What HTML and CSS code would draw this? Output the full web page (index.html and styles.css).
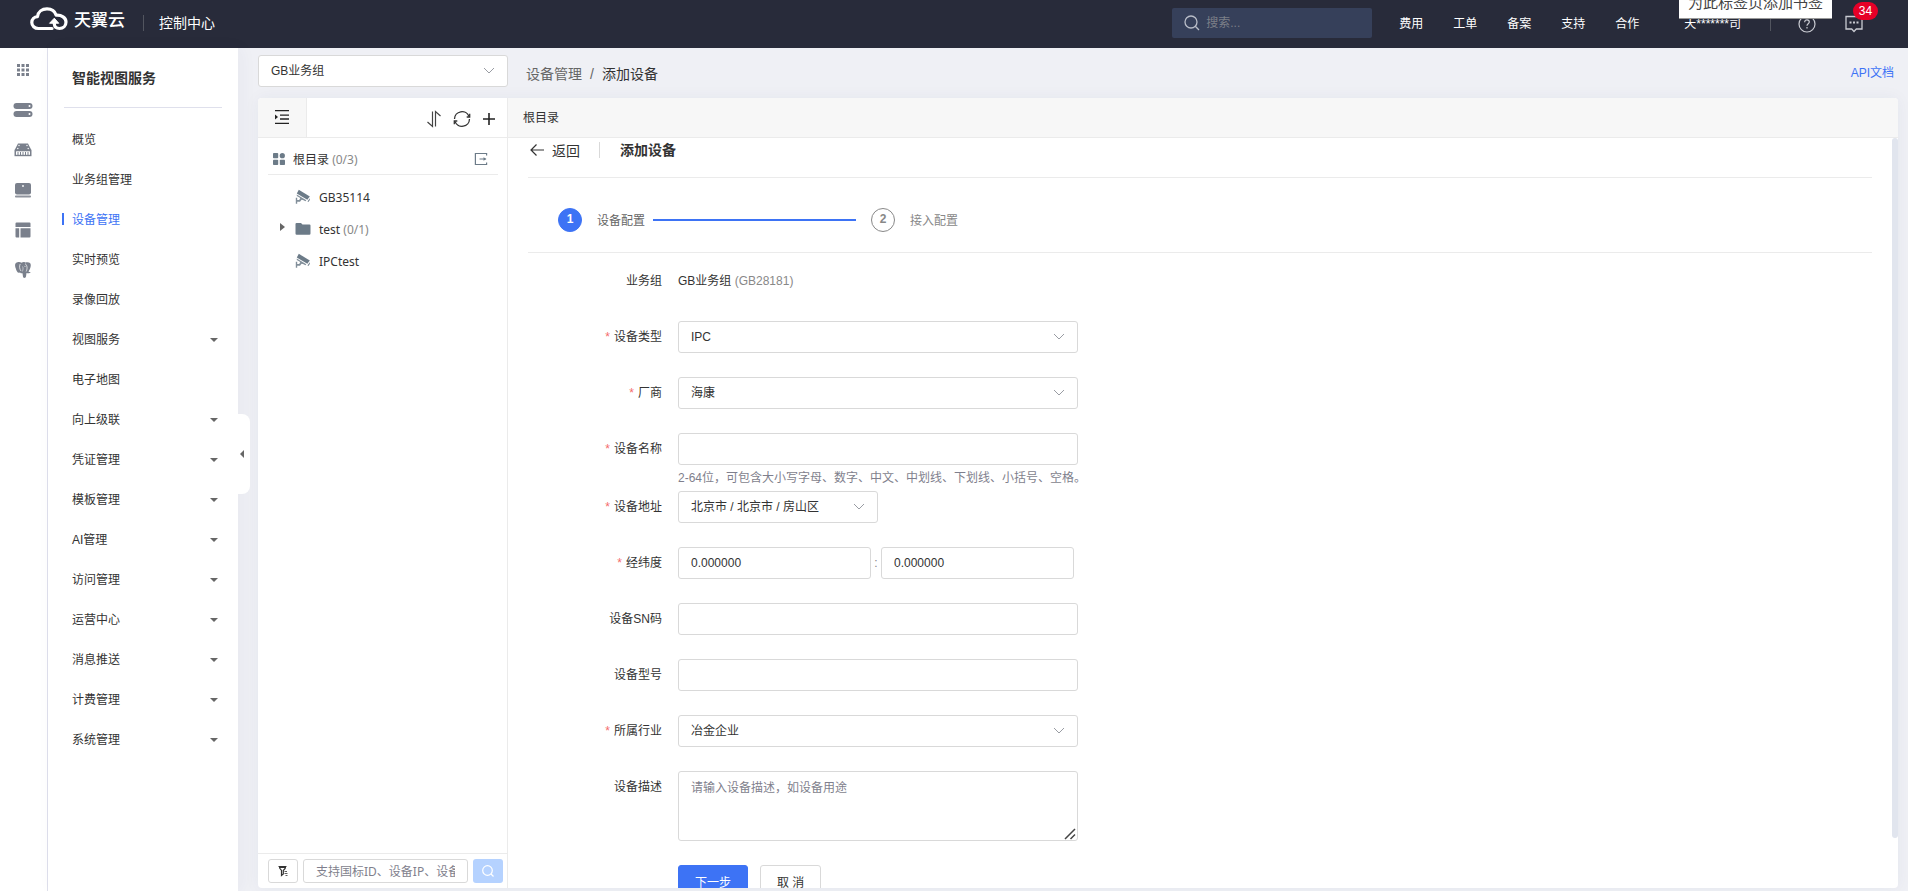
FILE: index.html
```html
<!DOCTYPE html>
<html lang="zh-CN">
  <head>
    <meta charset="utf-8">
    <title>智能视图服务 - 添加设备</title>
    <link rel="stylesheet" href="styles.css">
  </head>
  <body>
    <header class="header">
      <svg class="logo" width="38" height="24" viewBox="0 0 38 24" fill="none" stroke="#fff" stroke-width="3.2" stroke-linecap="round" stroke-linejoin="round">
        <path d="M22 21.5H8.500C4.500 21.500 1.800 18.800 1.800 15.500C1.800 12.300 4.300 9.800 7.500 9.600C8 4.800 12 1.800 17 1.800C21.500 1.800 25 4.300 26.200 8.200C31.500 7.800 36 10.800 36 15C36 18.800 33.300 21.500 29.500 21.500C26.500 21.500 24.500 19.600 24.300 17V15.500"/>
        <path d="M19.800 16L24.300 11.200L28.500 16Z" fill="#fff" stroke-width="1"/>
      </svg>
      <span class="brand">天翼云</span>
      <span class="header-line"></span>
      <a class="console" href="#">控制中心</a>
      <label class="search">
        <svg width="16" height="16" viewBox="0 0 16 16" fill="none" stroke="#b9bdc8" stroke-width="1.300"><circle cx="7" cy="7" r="6"/><path d="M11.300 11.300L15 15"/></svg>
        <input type="text" placeholder="搜索..." aria-label="搜索">
      </label>
      <nav class="top-nav">
        <a href="#">费用</a>
        <a href="#">工单</a>
        <a href="#">备案</a>
        <a href="#">支持</a>
        <a href="#">合作</a>
      </nav>
      <a class="user" href="#">天*******司</a>
      <span class="header-line user-line"></span>
      <button class="header-btn help-btn" aria-label="帮助">
        <svg width="18" height="18" viewBox="0 0 18 18" fill="none" stroke="#c9cbd2" stroke-width="1.200"><circle cx="9" cy="9" r="8"/><path d="M6.700 7.200C6.700 5.700 7.700 4.800 9 4.800S11.300 5.700 11.300 7C11.300 8.700 9 8.800 9 10.700"/><path d="M9 12v1.400"/></svg>
      </button>
      <button class="header-btn" aria-label="消息">
        <svg width="18" height="18" viewBox="0 0 18 18" fill="none" stroke="#c9cbd2" stroke-width="1.300"><path d="M1 1.500H17V14H11.300L9 16.500L6.700 14H1Z"/><path d="M4.500 7.500h2M8 7.500h2M11.500 7.500h2" stroke-width="1.800"/></svg>
        <span class="badge">34</span>
      </button>
      <div class="tooltip">为此标签页添加书签</div>
    </header>

    <div class="page">
      <nav class="rail">
        <a href="#" aria-label="全部产品"><svg width="20" height="20" viewBox="0 0 20 20"><path d="M4 4h3v3H4zM8.500 4h3v3h-3zM13 4h3v3h-3zM4 8.500h3v3H4zM8.500 8.500h3v3h-3zM13 8.500h3v3h-3zM4 13h3v3H4zM8.500 13h3v3h-3zM13 13h3v3h-3z"/></svg></a>
        <a href="#" aria-label="云主机"><svg width="20" height="20" viewBox="0 0 20 20"><rect x="0.500" y="3" width="19" height="6" rx="3"/><rect x="0.500" y="11" width="19" height="6" rx="3"/><circle cx="16.500" cy="6" r="1" fill="#fff"/><circle cx="16.500" cy="14" r="1" fill="#fff"/></svg></a>
        <a href="#" aria-label="物理机"><svg width="20" height="20" viewBox="0 0 20 20"><path d="M5 3.500h10l3.300 6.500H1.700z"/><path d="M1.500 9.800h17v6.400h-17z"/><path d="M3 11.300h14v3.500H3z" fill="#fff"/><path d="M4.500 12h1v3h-1zM7 12h1v3H7zM9.500 12h1v3h-1zM12 12h1v3h-1zM14.500 12h1v3h-1z"/><circle cx="6" cy="5.500" r="0.700" fill="#fff"/><circle cx="14" cy="5.500" r="0.700" fill="#fff"/><circle cx="4.800" cy="8.500" r="0.700" fill="#fff"/><circle cx="15.200" cy="8.500" r="0.700" fill="#fff"/></svg></a>
        <a href="#" aria-label="云桌面"><svg width="20" height="20" viewBox="0 0 20 20"><rect x="2" y="3" width="16" height="11.500" rx="2"/><rect x="2" y="15.500" width="16" height="2" rx="0.800" opacity="0.850"/><circle cx="10" cy="6" r="0.900" fill="#fff"/></svg></a>
        <a href="#" aria-label="控制面板"><svg width="20" height="20" viewBox="0 0 20 20"><path d="M4 2.500h12.500a1 1 0 0 1 1 1V7H2.500V3.500a1 1 0 0 1 1-1zM2.500 8.200h3.700v9.300H3.500a1 1 0 0 1-1-1zM7.500 8.200h10v8.300a1 1 0 0 1-1 1h-9z"/></svg></a>
        <a href="#" aria-label="PostgreSQL"><svg width="20" height="20" viewBox="0 0 20 20"><path d="M4.500 2.200C6 1.700 7.500 2 8.500 2.700C10 1.900 11 2 12.300 2.500C14 1.900 16 2 17 3C18.500 4.500 17.800 8 15.500 11.500C16 12.200 17.300 11.900 17.600 12.200C17 13.400 14.800 13.700 13.500 13L13 16.500C12.700 18.300 10.300 18.500 10 16.800L9.500 13.200C8.300 13.600 6.800 13.200 7.200 12.200C5 14 3.700 11.500 2.800 8.500C1.500 4.800 2 2.900 4.500 2.200Z"/><path d="M7.200 4C6 6.500 6.600 9 8 11M12 3.500C14.500 5.500 14.500 8.500 13.200 11.500" fill="none" stroke="#fff" stroke-width="0.700"/><path d="M9.500 6.500C10.500 8 10 10 9.300 11.500" fill="none" stroke="#fff" stroke-width="0.500"/><circle cx="12" cy="6.300" r="0.500" fill="#fff"/></svg></a>
      </nav>

      <aside class="sidebar">
        <h2 class="side-title">智能视图服务</h2>
        <ul class="menu">
          <li><a href="#">概览</a></li>
          <li><a href="#">业务组管理</a></li>
          <li><a href="#" class="active">设备管理</a></li>
          <li><a href="#">实时预览</a></li>
          <li><a href="#">录像回放</a></li>
          <li><a href="#" class="more">视图服务</a></li>
          <li><a href="#">电子地图</a></li>
          <li><a href="#" class="more">向上级联</a></li>
          <li><a href="#" class="more">凭证管理</a></li>
          <li><a href="#" class="more">模板管理</a></li>
          <li><a href="#" class="more">AI管理</a></li>
          <li><a href="#" class="more">访问管理</a></li>
          <li><a href="#" class="more">运营中心</a></li>
          <li><a href="#" class="more">消息推送</a></li>
          <li><a href="#" class="more">计费管理</a></li>
          <li><a href="#" class="more">系统管理</a></li>
        </ul>
        <button class="collapse" aria-label="收起菜单"></button>
      </aside>

      <main class="main">
        <div class="topbar">
          <div class="select group-select">
            <select aria-label="业务组"><option>GB业务组</option></select>
            <svg width="12" height="8" viewBox="0 0 12 8"><path d="M1 1l5 5 5-5"/></svg>
          </div>
          <div class="breadcrumb"><a href="#">设备管理</a><span class="slash">/</span><span class="current">添加设备</span></div>
          <a class="api-link" href="#">API文档</a>
        </div>

        <div class="panel">
          <section class="tree">
            <div class="tree-tools">
              <button class="fold" aria-label="折叠目录">
                <svg width="16" height="16" viewBox="0 0 16 16" stroke="#222" stroke-width="1.300" fill="none"><path d="M1 1.700h14M6 6.200h9M6 10h9M1 14.300h14"/><path d="M1 5.500L4 8L1 10.500Z" fill="#222" stroke="none"/></svg>
              </button>
              <div class="tree-actions">
                <button aria-label="排序"><svg width="16" height="18" viewBox="0 0 16 18" stroke="#444" stroke-width="1.200" fill="none"><path d="M1.500 12L6.500 16.500V1.500M9.500 16.500V1.500L14.500 6"/></svg></button>
                <button aria-label="刷新"><svg width="18" height="18" viewBox="0 0 18 18" stroke="#333" stroke-width="1.300" fill="none"><path d="M1.500 9A7.500 7.500 0 0 1 16 6.500M16.500 9A7.500 7.500 0 0 1 2 11.500"/><path d="M16.700 3.800V7H13.700M1.300 14.200V11H4.300"/></svg></button>
                <button aria-label="添加"><svg width="14" height="14" viewBox="0 0 14 14" stroke="#222" stroke-width="1.600" fill="none"><path d="M7 1v12M1 7h12"/></svg></button>
              </div>
            </div>
            <div class="tree-root">
              <svg width="12" height="12" viewBox="0 0 12 12" fill="#6c7b88"><rect width="5.200" height="5.200" rx="0.800"/><circle cx="9.300" cy="2.700" r="2.600"/><rect y="6.800" width="5.200" height="5.200" rx="0.800"/><rect x="6.800" y="6.800" width="5.200" height="5.200" rx="0.800"/></svg>
              <span>根目录 <em>(0/3)</em></span>
              <button class="export" aria-label="导出"><svg width="14" height="14" viewBox="0 0 14 14" stroke="#6c7b88" stroke-width="1.200" fill="none"><path d="M12.600 3.500V1.500H1.400v11h11.200V10.500"/><path d="M5.500 7h6"/><path d="M9.500 5.200L12.500 7L9.500 8.800Z" fill="#6c7b88" stroke="none"/></svg></button>
            </div>
            <ul class="tree-list">
              <li>
                <svg class="node-icon" width="16" height="16" viewBox="0 0 16 16" fill="#6c7b88"><path d="M3.800 0.800L14.800 7.500L12.300 10.800L1.800 4.500Z"/><path d="M1.800 5.500L11.300 11.200L10.500 12.300L8 11L6.500 10.800L5 12.800H2.200V14.800H0.800V8.800H2.200V11H4.200L5.300 9L1.800 7Z" opacity="0.850"/><path d="M12.500 12.500L14.800 9.300V11L13.300 13Z"/></svg>
                <span>GB35114</span>
              </li>
              <li class="has-children">
                <svg class="node-icon" width="16" height="16" viewBox="0 0 16 16" fill="#6c7b88"><path d="M1.500 2H6L7.500 3.500H14.500A1 1 0 0 1 15.500 4.500V12.500A1.200 1.200 0 0 1 14.300 13.700H1.700A1.200 1.200 0 0 1 0.500 12.500V3A1 1 0 0 1 1.500 2Z"/></svg>
                <span>test <em>(0/1)</em></span>
              </li>
              <li>
                <svg class="node-icon" width="16" height="16" viewBox="0 0 16 16" fill="#6c7b88"><path d="M3.800 0.800L14.800 7.500L12.300 10.800L1.800 4.500Z"/><path d="M1.800 5.500L11.300 11.200L10.500 12.300L8 11L6.500 10.800L5 12.800H2.200V14.800H0.800V8.800H2.200V11H4.200L5.300 9L1.800 7Z" opacity="0.850"/><path d="M12.500 12.500L14.800 9.300V11L13.300 13Z"/></svg>
                <span>IPCtest</span>
              </li>
            </ul>
            <div class="tree-search">
              <button class="filter" aria-label="筛选"><svg width="12" height="12" viewBox="0 0 12 12" stroke="#333" stroke-width="1.200" fill="none"><path d="M1.500 1.500H9.500M2 2.500H9M2.500 3L4.500 5.500V10.500L6.300 9V5.500L8.500 3"/><path d="M7.500 6.500h2.500M7.500 8.500h3M8.500 10.500h2" stroke-width="0.800"/></svg></button>
              <input type="text" placeholder="支持国标ID、设备IP、设备名" aria-label="搜索设备">
              <button class="find" aria-label="搜索"><svg width="14" height="14" viewBox="0 0 14 14" stroke="#fff" stroke-width="1.200" fill="none"><circle cx="6.500" cy="6.500" r="4.800"/><path d="M10 10l2.500 2.500"/></svg></button>
            </div>
          </section>

          <section class="content">
            <div class="path">根目录</div>
            <div class="scroll">
              <div class="back-row">
                <a href="#" class="back"><svg width="16" height="14" viewBox="0 0 16 14" stroke="#333" stroke-width="1.200" fill="none"><path d="M7.500 1.500L2 7L7.500 12.500M2 7H15"/></svg>返回</a>
                <h1>添加设备</h1>
              </div>
              <div class="steps">
                <span class="step-num on">1</span>
                <span class="step-name">设备配置</span>
                <span class="step-line"></span>
                <span class="step-num">2</span>
                <span class="step-name next">接入配置</span>
              </div>
              <form class="form">
                <div class="row">
                  <span class="label">业务组</span>
                  <div class="field text">GB业务组 <em>(GB28181)</em></div>
                </div>
                <div class="row">
                  <label class="label required" for="type">设备类型</label>
                  <div class="field select">
                    <select id="type"><option>IPC</option></select>
                    <svg width="12" height="8" viewBox="0 0 12 8"><path d="M1 1l5 5 5-5"/></svg>
                  </div>
                </div>
                <div class="row">
                  <label class="label required" for="vendor">厂商</label>
                  <div class="field select">
                    <select id="vendor"><option>海康</option></select>
                    <svg width="12" height="8" viewBox="0 0 12 8"><path d="M1 1l5 5 5-5"/></svg>
                  </div>
                </div>
                <div class="row with-tip">
                  <label class="label required" for="name">设备名称</label>
                  <div class="field">
                    <input type="text" id="name">
                    <p class="tip">2-64位，可包含大小写字母、数字、中文、中划线、下划线、小括号、空格。</p>
                  </div>
                </div>
                <div class="row">
                  <label class="label required" for="address">设备地址</label>
                  <div class="field select short">
                    <select id="address"><option>北京市 / 北京市 / 房山区</option></select>
                    <svg width="12" height="8" viewBox="0 0 12 8"><path d="M1 1l5 5 5-5"/></svg>
                  </div>
                </div>
                <div class="row">
                  <label class="label required" for="longitude">经纬度</label>
                  <div class="field pair">
                    <input type="text" id="longitude" value="0.000000">
                    <span>:</span>
                    <input type="text" value="0.000000" aria-label="纬度">
                  </div>
                </div>
                <div class="row">
                  <label class="label" for="sn">设备SN码</label>
                  <div class="field"><input type="text" id="sn"></div>
                </div>
                <div class="row">
                  <label class="label" for="model">设备型号</label>
                  <div class="field"><input type="text" id="model"></div>
                </div>
                <div class="row">
                  <label class="label required" for="industry">所属行业</label>
                  <div class="field select">
                    <select id="industry"><option>冶金企业</option></select>
                    <svg width="12" height="8" viewBox="0 0 12 8"><path d="M1 1l5 5 5-5"/></svg>
                  </div>
                </div>
                <div class="row">
                  <label class="label" for="desc">设备描述</label>
                  <div class="field area">
                    <textarea id="desc" placeholder="请输入设备描述，如设备用途"></textarea>
                    <svg class="grip" width="12" height="12" viewBox="0 0 12 12" stroke="#444" stroke-width="1.500"><path d="M1 11L11 1M6.500 11L11 6.500"/></svg>
                  </div>
                </div>
                <div class="row">
                  <span class="label"></span>
                  <div class="field buttons">
                    <button type="button" class="btn primary">下一步</button>
                    <button type="button" class="btn">取 消</button>
                  </div>
                </div>
              </form>
            </div>
            <div class="thumb"></div>
          </section>
        </div>
      </main>
    </div>
  </body>
</html>
```

FILE: styles.css
```css
* {
  box-sizing: border-box;
}

body {
  margin: 0;
  height: 100vh;
  display: flex;
  flex-direction: column;
  overflow: hidden;
  font-family: "Liberation Sans", "Noto Sans CJK SC", sans-serif;
  font-size: 12px;
  color: #333;
  background-color: #eff0f5;
}

a {
  color: inherit;
  text-decoration: none;
}

ul, h1, h2, p {
  margin: 0;
  padding: 0;
  list-style: none;
}

em {
  font-style: normal;
  color: #888;
}

button, input, select, textarea {
  font: inherit;
  color: inherit;
}

button {
  padding: 0;
  border: none;
  background: none;
  cursor: pointer;
}

svg {
  display: block;
  flex: none;
}

/* Header */
.header {
  position: relative;
  flex: none;
  height: 48px;
  padding: 0 45px 10px 30px;
  display: flex;
  align-items: center;
  background-color: #282b3a;
  color: #fff;
}

.brand {
  margin: 4px 0 0 6px;
  font-size: 17px;
  line-height: 24px;
  font-weight: 500;
}

.header-line {
  width: 1px;
  height: 16px;
  margin: 8px 15px 0 18px;
  background-color: #52555f;
}

.console {
  margin-top: 6px;
  font-size: 14px;
}

.search {
  display: flex;
  align-items: center;
  gap: 6px;
  width: 200px;
  height: 30px;
  margin: 8px 0 0 auto;
  padding: 0 12px;
  background-color: #36405a;
  border-radius: 2px;
}

.search input {
  width: 100%;
  padding: 0;
  border: none;
  outline: none;
  background: none;
}

.search input::placeholder {
  color: #7c7f88;
}

.top-nav {
  display: flex;
  gap: 30px;
  margin: 6px 45px 0 27px;
}

.user {
  margin-top: 6px;
}

.user-line {
  margin: 8px 27px 0 29px;
}

.header-btn {
  position: relative;
  margin-top: 9px;
}

.help-btn {
  margin-right: 29px;
}

.badge {
  position: absolute;
  left: 8px;
  top: -13px;
  width: 25px;
  height: 18px;
  line-height: 18px;
  border-radius: 9px;
  background-color: #e60027;
  color: #fff;
}

.tooltip {
  position: absolute;
  top: -8px;
  right: 76px;
  padding: 0 9px;
  height: 27px;
  line-height: 22px;
  font-size: 15px;
  color: #444;
  background-color: #fff;
  border-bottom: 1px solid #999;
}

/* Page */
.page {
  flex: 1;
  min-height: 0;
  display: flex;
}

.rail {
  flex: none;
  width: 48px;
  padding: 2px 2px 0 0;
  background-color: #fff;
  border-right: 1px solid #dfe0ec;
}

.rail a {
  display: flex;
  align-items: center;
  justify-content: center;
  height: 40px;
}

.rail svg {
  fill: #7a808c;
}

.sidebar {
  position: relative;
  flex: none;
  width: 190px;
  background-color: #fff;
  box-shadow: 4px 0 16px rgba(40, 50, 90, 0.04);
}

.side-title {
  margin: 0 16px 10px;
  padding: 1px 0 0 8px;
  font-size: 14px;
  line-height: 58px;
  border-bottom: 1px solid #dfe0ec;
}

.menu a {
  display: flex;
  align-items: center;
  justify-content: space-between;
  height: 40px;
  padding: 0 20px 0 24px;
}

.menu .active {
  color: #3d73f5;
  padding-left: 14px;
  justify-content: flex-start;
  gap: 8px;
}

.menu .active::before {
  content: "";
  width: 2px;
  height: 12px;
  margin-top: 2px;
  background-color: #3d73f5;
}

.menu .more::after {
  content: "";
  margin-top: 4px;
  border: 4px solid transparent;
  border-top-color: #666;
  border-bottom: none;
}

.collapse {
  position: absolute;
  left: 100%;
  top: 366px;
  display: flex;
  align-items: center;
  width: 12px;
  height: 80px;
  padding-left: 2px;
  background-color: #fff;
  border-radius: 0 8px 8px 0;
}

.collapse::before {
  content: "";
  border: 4px solid transparent;
  border-right-color: #666;
  border-left: none;
}

.main {
  flex: 1;
  min-width: 0;
  display: flex;
  flex-direction: column;
  padding: 7px 10px 3px 20px;
}

.topbar {
  display: flex;
  align-items: center;
  margin-bottom: 11px;
}

.group-select {
  width: 250px;
}

.breadcrumb {
  margin: 4px 0 0 18px;
  font-size: 14px;
  color: #666;
}

.slash {
  margin: 0 8px;
}

.current {
  color: #333;
}

.api-link {
  margin: 0 4px 0 auto;
  color: #3d73f5;
}

/* Inputs */
input, select, textarea {
  display: block;
  width: 100%;
  height: 32px;
  margin: 0;
  padding: 0 12px;
  background-color: #fff;
  border: 1px solid #d9d9d9;
  border-radius: 3px;
}

select {
  appearance: none;
}

textarea {
  height: 70px;
  padding: 6px 12px;
  line-height: 20px;
  resize: none;
}

input::placeholder, textarea::placeholder {
  color: #7f7f8d;
}

.select {
  position: relative;
}

.select svg {
  position: absolute;
  right: 13px;
  top: 12px;
  fill: none;
  stroke: #999ca3;
  pointer-events: none;
}

/* Panel */
.panel {
  flex: 1;
  min-height: 0;
  display: flex;
  background-color: #fff;
  border-radius: 4px;
  box-shadow: 0 0 16px rgba(40, 50, 90, 0.05);
  overflow: hidden;
}

.tree {
  flex: none;
  width: 250px;
  display: flex;
  flex-direction: column;
  border-right: 1px solid #ebebeb;
  font-family: "Noto Sans", "Noto Sans CJK SC", sans-serif;
}

.tree-tools {
  display: flex;
  justify-content: space-between;
  height: 40px;
  border-bottom: 1px solid #ebebeb;
}

.fold {
  width: 49px;
  padding: 0 0 2px 16px;
  background-color: #f7f7f7;
  border-right: 1px solid #ebebeb;
}

.tree-actions {
  display: flex;
  align-items: center;
  gap: 11px;
  padding: 3px 11px 0 0;
}

.tree-root {
  display: flex;
  align-items: center;
  gap: 8px;
  height: 37px;
  margin: 0 9px 6px 10px;
  padding: 5px 10px 0 5px;
  border-bottom: 1px solid #ebebeb;
}

.export {
  margin-left: auto;
}

.tree-list {
  flex: 1;
}

.tree-list li {
  position: relative;
  display: flex;
  align-items: center;
  gap: 8px;
  height: 32px;
  padding-left: 37px;
}

.has-children::before {
  content: "";
  position: absolute;
  left: 22px;
  top: 10px;
  border: 4px solid transparent;
  border-left: 5px solid #666;
  border-right: none;
}

.tree-search {
  display: flex;
  gap: 5px;
  height: 35px;
  padding: 5px 4px 0 10px;
  border-top: 1px solid #ebebeb;
}

.tree-search button {
  display: flex;
  align-items: center;
  justify-content: center;
  width: 30px;
  height: 24px;
  border-radius: 3px;
}

.tree-search .filter {
  border: 1px solid #d9d9d9;
}

.tree-search .find {
  background-color: #b5d2ff;
}

.tree-search input {
  flex: 1;
  width: 0;
  height: 24px;
}

.content {
  position: relative;
  flex: 1;
  min-width: 0;
  display: flex;
  flex-direction: column;
}

.path {
  flex: none;
  height: 40px;
  padding-left: 15px;
  line-height: 40px;
  background-color: #f7f7f7;
  border-bottom: 1px solid #ebebeb;
}

.scroll {
  flex: 1;
  min-height: 0;
  padding: 0 26px 0 20px;
  overflow: hidden;
}

.thumb {
  position: absolute;
  top: 40px;
  right: 0;
  bottom: 50px;
  width: 6px;
  border-radius: 3px;
  background-color: #e1e5ee;
}

.back-row {
  display: flex;
  align-items: center;
  height: 40px;
  padding-bottom: 15px;
  border-bottom: 1px solid #ebebeb;
}

.back {
  display: flex;
  align-items: center;
  gap: 7px;
  padding-left: 1px;
  font-size: 14px;
}

.back-row h1 {
  margin-left: 19px;
  padding-left: 20px;
  font-size: 14px;
  line-height: 16px;
  border-left: 1px solid #d9d9d9;
}

.steps {
  display: flex;
  align-items: center;
  height: 75px;
  padding: 10px 30px 0;
  border-bottom: 1px solid #ebebeb;
}

.step-num {
  width: 24px;
  height: 24px;
  margin-right: 15px;
  line-height: 20px;
  text-align: center;
  font-weight: bold;
  color: #888;
  border: 1px solid #888;
  border-radius: 50%;
}

.step-num.on {
  color: #fff;
  background-color: #3d73f5;
  border-color: #3d73f5;
}

.step-name {
  padding-bottom: 2px;
  color: #666;
}

.step-name.next {
  color: #888;
}

.step-line {
  width: 203px;
  height: 2px;
  margin: 0 15px 0 8px;
  background-color: #3d73f5;
}

/* Form */
.form {
  padding-top: 12px;
}

.row {
  display: flex;
  margin-bottom: 24px;
}

.row.with-tip {
  margin-bottom: 0;
}

.label {
  width: 134px;
  margin-right: 16px;
  line-height: 32px;
  text-align: right;
}

.required::before {
  content: "*";
  margin-right: 4px;
  color: #f56c6c;
}

.field {
  width: 400px;
}

.field.text {
  line-height: 32px;
}

.field.short {
  width: 200px;
}

.tip {
  line-height: 26px;
  white-space: nowrap;
  color: #7f7f8d;
}

.pair {
  display: flex;
  align-items: center;
}

.pair input {
  width: 193px;
}

.pair span {
  width: 10px;
  text-align: center;
  color: #888;
}

.area {
  position: relative;
}

.grip {
  position: absolute;
  right: 2px;
  bottom: 1px;
  pointer-events: none;
}

.buttons {
  display: flex;
  gap: 12px;
}

.btn {
  height: 32px;
  padding: 0 16px;
  border: 1px solid #d9d9d9;
  border-radius: 3px;
}

.btn.primary {
  width: 70px;
  color: #fff;
  background-color: #3d73f5;
  border-color: #3d73f5;
}
```
